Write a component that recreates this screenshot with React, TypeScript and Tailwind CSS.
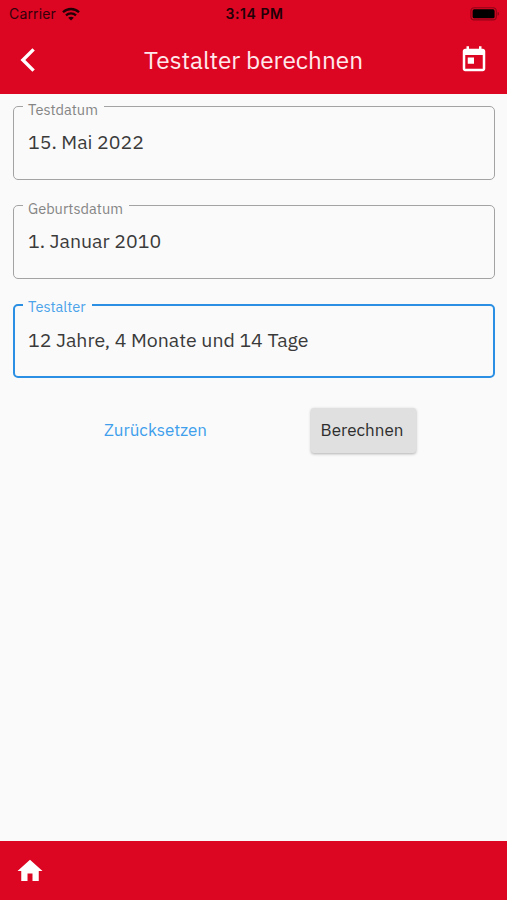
import React from "react";

const plex = "font-['IBM_Plex_Sans','Noto_Sans',sans-serif]";

type FieldProps = {
  label: string;
  value: string;
  active?: boolean;
};

function Field({ label, value, active }: FieldProps) {
  return (
    <fieldset
      className={`min-w-0 rounded-[5px] ${
        active ? "mt-px h-[83px] border-2 border-[#2b8fe3]" : "h-[84px] border border-[#a3a3a3]"
      }`}
    >
      <legend
        className={`${
          active ? "ml-[8px] pt-[3px] text-[#4ba3ea]" : "ml-[9px] pt-[7px] text-[#858585]"
        } flex h-5 items-center whitespace-nowrap pl-[5px] pr-[6px] text-[14.6px] leading-5`}
      >
        {label}
      </legend>
      <div
        className={`${
          active ? "pl-[13px] pt-[12px]" : "pl-[14px] pt-[13px]"
        } whitespace-nowrap text-[19.5px] leading-[26px] text-[#3a3a3a]`}
      >
        {value}
      </div>
    </fieldset>
  );
}

export default function App() {
  return (
    <div className={`flex h-[900px] w-[507px] flex-col overflow-hidden bg-[#fafafa] ${plex}`}>
      <header className="h-[94px] shrink-0 bg-[#dc0623]">
        <div className="grid h-[27px] grid-cols-3 items-center pl-[9px] pr-[7px] font-['Inter',sans-serif] text-[#33000a]">
          <div className="flex items-center gap-[6px] text-[14px] leading-none">
            <span className="tracking-[0.15px]">Carrier</span>
            <svg width="18" height="14" viewBox="0 0 18 14" fill="none" stroke="#210006" strokeWidth="2.3">
              <path d="M1 5.2C5.4 0.9 12.6 0.9 17 5.2" />
              <path d="M4 8.3C6.8 5.7 11.2 5.7 14 8.3" />
              <path d="M9 13.6L6.2 10.8C7.8 9.5 10.2 9.5 11.8 10.8Z" fill="#210006" stroke="none" />
            </svg>
          </div>
          <div className="text-center text-[14px] font-semibold leading-none tracking-[0.55px] text-[#210006]">3:14 PM</div>
          <div className="flex justify-end">
            <svg width="30" height="14" viewBox="0 0 30 14">
              <rect x="0.9" y="0.7" width="25.4" height="12.2" rx="3.4" fill="none" stroke="#8f0417" strokeWidth="1.1" />
              <rect x="2.6" y="2.3" width="22" height="9" rx="1.6" fill="#000" />
              <path d="M27.6 4.8C29.6 5.5 29.6 8.1 27.6 8.8Z" fill="#8f0417" />
            </svg>
          </div>
        </div>
        <div className="grid h-[66px] grid-cols-[60px_1fr_60px] items-center text-white">
          <svg className="ml-5" width="16" height="24" viewBox="0 0 16 24" fill="none" stroke="#fff" strokeWidth="3.4">
            <path d="M13.6 1.4L2.9 12L13.6 22.6" />
          </svg>
          <h1 className="text-center text-[24.4px] leading-8 text-[#ffe9ec]">Testalter berechnen</h1>
          <svg className="ml-[12px]" width="30" height="30" viewBox="0 0 24 24" fill="#fff">
            <path d="M19 3h-1V1h-2v2H8V1H6v2H5c-1.11 0-1.99.9-1.99 2L3 19c0 1.1.89 2 2 2h14c1.1 0 2-.9 2-2V5c0-1.1-.9-2-2-2zm0 16H5V8h14v11zM7 10h5v5H7z" />
          </svg>
        </div>
      </header>

      <main className="flex-1 pl-[13px] pr-3 pt-[2px]">
        <div className="flex flex-col gap-[15px]">
          <Field label="Testdatum" value="15. Mai 2022" />
          <Field label="Geburtsdatum" value="1. Januar 2010" />
          <Field label="Testalter" value="12 Jahre, 4 Monate und 14 Tage" active />
        </div>
        <div className="mt-[30px] grid grid-cols-2 text-[17px] leading-6">
          <div className="flex h-[45px] items-center pb-[2px] pl-[91px]">
            <button className="text-[#3f9fec]">Zurücksetzen</button>
          </div>
          <div className="flex pl-[56.5px]">
            <button className="h-[45px] w-[105px] rounded-[3px] bg-[#e0e0e0] pb-[2px] pr-[2px] text-[#2e2e2e] shadow-[0_1px_3px_rgba(0,0,0,0.3)]">
              Berechnen
            </button>
          </div>
        </div>
      </main>

      <footer className="h-[59px] shrink-0 bg-[#dc0623] pl-[15px] pt-[15px]">
        <svg width="30" height="30" viewBox="0 0 24 24" fill="#fff">
          <path d="M10 20v-6h4v6h5v-8h3L12 3 2 12h3v8z" />
        </svg>
      </footer>
    </div>
  );
}
